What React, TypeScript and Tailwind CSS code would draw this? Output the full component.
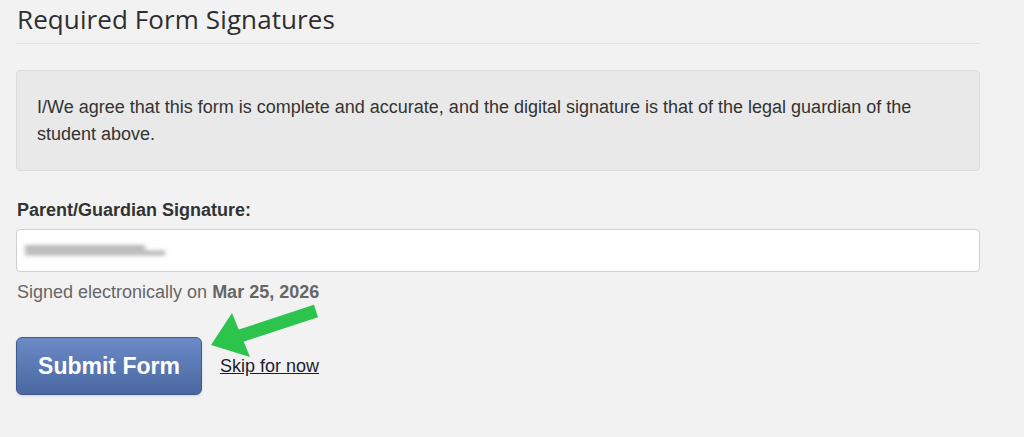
export default function App() {
  return (
    <div className="min-h-screen w-full bg-[#f2f2f2] font-['Liberation_Sans',Arial,sans-serif] text-[#333]">
      <div className="relative w-[964px] ml-4 pt-[2px]">
        {/* Heading */}
        <h2 className="pl-[1px] pb-[6px] border-b border-[#e3e3e3] font-['Open_Sans',sans-serif] text-[26px] leading-[35px] text-[#2e2e2e] tracking-[0.1px]">
          Required Form Signatures
        </h2>

        {/* Agreement box */}
        <div className="mt-[26px] h-[101px] rounded-[4px] border border-[#dcdcdc] bg-[#e9e9e9] px-5 pt-[23px] text-[18px] leading-[27px] text-[#333]">
          I/We agree that this form is complete and accurate, and the digital signature is that of the legal guardian of the student above.
        </div>

        {/* Signature */}
        <label className="mt-[27px] block pl-[1px] text-[18px] font-bold leading-6 text-[#333]">
          Parent/Guardian Signature:
        </label>
        <div className="mt-[7px] flex h-[43px] items-center rounded-[4px] border border-[#cfcfcf] bg-white px-2">
          <div className="flex flex-col gap-[2px] blur-[2px]">
            <div className="h-[3px] w-[120px] bg-[#8a8a8a]" />
            <div className="h-[4px] w-[140px] bg-[#a5a5a5]" />
          </div>
        </div>
        <p className="mt-2 pl-[1px] text-[18px] leading-6 text-[#666]">
          Signed electronically on <span className="font-bold">Mar 25, 2026</span>
        </p>

        {/* Actions */}
        <div className="mt-[33px] flex items-center gap-[18px]">
          <button className="h-[58px] w-[186px] rounded-[6px] border border-[#3e5a8e] bg-gradient-to-b from-[#6b8bc8] to-[#4a679f] text-[23px] font-bold text-white shadow-sm">
            Submit Form
          </button>
          <a href="#" className="text-[18px] text-[#1c1c33] underline">
            Skip for now
          </a>
        </div>

        {/* Green callout arrow */}
        <svg className="absolute left-[-16px] top-0" width="400" height="437" viewBox="0 0 400 437">
          <line x1="316" y1="311" x2="240" y2="336" stroke="#2cc44c" strokeWidth="13" />
          <polygon points="211,345 232,313 250,357" fill="#2cc44c" />
        </svg>
      </div>
    </div>
  )
}
